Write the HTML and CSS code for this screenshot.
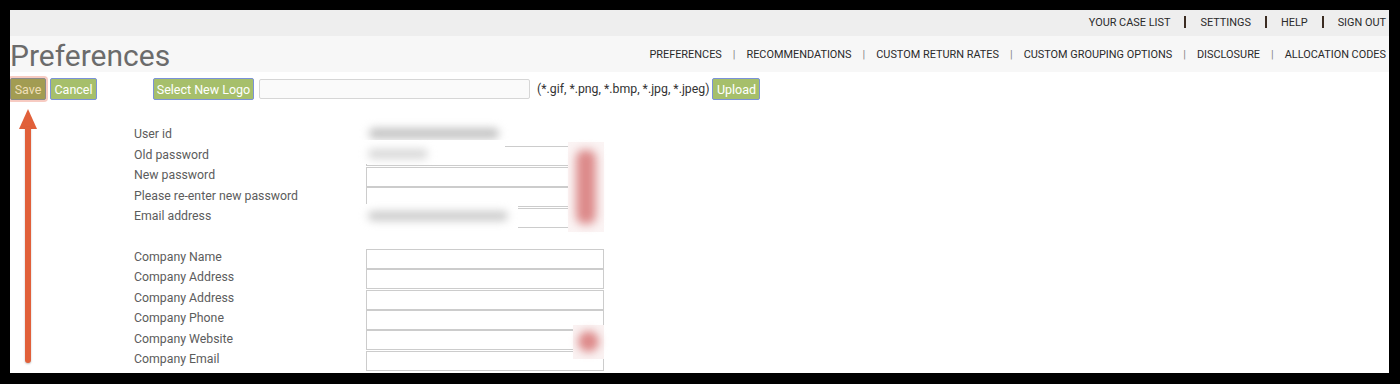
FILE: index.html
```html
<!DOCTYPE html>
<html>
<head>
<meta charset="utf-8">
<link rel="stylesheet" href="styles.css">
</head>
<body>
<div class="frame">
  <div class="topbar">
    <a class="toplink">YOUR CASE LIST</a><span class="bar"></span>
    <a class="toplink">SETTINGS</a><span class="bar"></span>
    <a class="toplink">HELP</a><span class="bar"></span>
    <a class="toplink">SIGN OUT</a>
  </div>
  <div class="header">
    <h1 class="title">Preferences</h1>
    <nav class="subnav">
      <a>PREFERENCES</a><span class="sep">|</span>
      <a>RECOMMENDATIONS</a><span class="sep">|</span>
      <a>CUSTOM RETURN RATES</a><span class="sep">|</span>
      <a>CUSTOM GROUPING OPTIONS</a><span class="sep">|</span>
      <a>DISCLOSURE</a><span class="sep">|</span>
      <a>ALLOCATION CODES</a>
    </nav>
  </div>
  <div class="toolbar">
    <button class="btn btn-save">Save</button>
    <button class="btn btn-cancel">Cancel</button>
    <button class="btn btn-logo">Select New Logo</button>
    <input class="file-input" type="text">
    <span class="hint">(*.gif, *.png, *.bmp, *.jpg, *.jpeg)</span>
    <button class="btn btn-upload">Upload</button>
  </div>
  <div class="form">
    <div class="grid">
      <label class="lbl">User id</label>
      <div class="cell"><div class="blur-text w1"></div></div>
      <label class="lbl">Old password</label>
      <div class="cell"><input class="field" type="password"><div class="mask m1"><div class="blur-text w2"></div></div></div>
      <label class="lbl">New password</label>
      <div class="cell"><input class="field" type="password"></div>
      <label class="lbl">Please re-enter new password</label>
      <div class="cell"><input class="field" type="password"></div>
      <label class="lbl">Email address</label>
      <div class="cell"><input class="field" type="text"><div class="mask m2"><div class="blur-text w3"></div></div></div>
      <div class="spacer"></div>
      <label class="lbl">Company Name</label>
      <div class="cell"><input class="field" type="text"></div>
      <label class="lbl">Company Address</label>
      <div class="cell"><input class="field" type="text"></div>
      <label class="lbl">Company Address</label>
      <div class="cell"><input class="field" type="text"></div>
      <label class="lbl">Company Phone</label>
      <div class="cell"><input class="field" type="text"></div>
      <label class="lbl">Company Website</label>
      <div class="cell"><input class="field" type="text"></div>
      <label class="lbl">Company Email</label>
      <div class="cell"><input class="field" type="text"></div>
    </div>
    <div class="redact r1"><div class="redact-core"></div></div>
    <div class="redact r2"><div class="redact-dot"></div></div>
  </div>
  <div class="arrow">
    <div class="arrow-head"></div>
    <div class="arrow-shaft"></div>
  </div>
</div>
</body>
</html>
```

FILE: styles.css
```css
html, body {
  margin: 0;
  padding: 0;
  background: #000;
}
body {
  font-family: Roboto, "Liberation Sans", Arial, sans-serif;
}
.frame {
  position: relative;
  margin: 10px 0 0 10px;
  width: 1379px;
  height: 363px;
  background: #fff;
  overflow: hidden;
}
.topbar {
  height: 26px;
  background: #eeeeee;
  display: flex;
  justify-content: flex-end;
  align-items: center;
  padding-right: 3px;
  box-sizing: border-box;
  padding-bottom: 2px;
}
.toplink {
  font-size: 10.9px;
  color: #2a2a2a;
}
.bar {
  display: inline-block;
  width: 2px;
  height: 12px;
  background: #3b2c22;
  margin: 0 14px;
}
.header {
  height: 36px;
  background: #f7f7f7;
  display: flex;
  justify-content: space-between;
  align-items: center;
}
.title {
  margin: 0;
  font-size: 30px;
  font-weight: 400;
  color: #6b6b6b;
  line-height: 36px;
  padding-top: 3px;
}
.subnav {
  font-size: 10.9px;
  color: #2a2a2a;
  padding-right: 3px;
  display: flex;
  align-items: center;
  padding-top: 1px;
}
.subnav .sep {
  color: #888;
  margin: 0 11px;
}
.toolbar {
  margin-top: 6px;
  height: 22px;
  display: flex;
  align-items: center;
}
.btn {
  height: 22px;
  box-sizing: border-box;
  font-family: Roboto, "Liberation Sans", Arial, sans-serif;
  font-size: 12.5px;
  color: #fff;
  background: #a6bf6b;
  border: 1px solid #7b92d8;
  border-radius: 2px;
  padding: 0;
  margin: 0;
}
.btn-save {
  background: #a29c52;
  color: #f0dfb8;
  border-color: #8a8b8a;
  box-shadow: 0 0 0 2px #f7cbc2;
  width: 36px;
}
.btn-cancel {
  margin-left: 4px;
  width: 47px;
}
.btn-logo {
  margin-left: 56px;
  width: 101px;
}
.file-input {
  margin-left: 5px;
  width: 271px;
  height: 20px;
  box-sizing: border-box;
  border: 1px solid #d6d6d6;
  border-radius: 2px;
  background: #fafafa;
  padding: 0;
}
.hint {
  margin-left: 7px;
  font-size: 12.3px;
  color: #333;
}
.btn-upload {
  margin-left: 3px;
  width: 48px;
}
.form {
  position: relative;
  margin-top: 24px;
  padding-left: 124px;
}
.grid {
  display: grid;
  grid-template-columns: 232px 238px;
  grid-auto-rows: 20.45px;
}
.lbl {
  font-size: 12.3px;
  color: #5c5c5c;
  align-self: center;
  white-space: nowrap;
}
.spacer {
  grid-column: 1 / span 2;
}
.cell {
  position: relative;
}
.field {
  display: block;
  width: 238px;
  height: 20px;
  margin: 2px 0 0 0;
  box-sizing: border-box;
  border: 1px solid #cccccc;
  background: #fff;
  padding: 0;
}
.blur-text {
  background: #c4c4c4;
  filter: blur(4px);
  border-radius: 5px;
}
.w1 {
  width: 130px;
  height: 11px;
  margin: 4px 0 0 3px;
}
.mask {
  position: absolute;
  background: #fff;
  top: 0;
  left: -6px;
}
.m1 {
  width: 145px;
  height: 24px;
  top: -4px;
}
.w2 {
  width: 60px;
  height: 10px;
  margin: 9px 0 0 8px;
  background: #d8d8d8;
}
.m2 {
  width: 160px;
  height: 24px;
  top: -2px;
  left: -8px;
}
.w3 {
  width: 140px;
  height: 10px;
  margin: 7px 0 0 10px;
  background: #cccccc;
}
.redact {
  position: absolute;
  background: #fbf4f4;
}
.r1 {
  left: 558px;
  top: 18px;
  width: 36px;
  height: 90px;
}
.redact-core {
  position: absolute;
  left: 8px;
  top: 8px;
  width: 20px;
  height: 74px;
  background: #dc8a8a;
  filter: blur(5px);
  border-radius: 8px;
}
.r2 {
  left: 563px;
  top: 201px;
  width: 31px;
  height: 34px;
  background: #faf2f2;
}
.redact-dot {
  position: absolute;
  left: 5px;
  top: 6px;
  width: 21px;
  height: 21px;
  border-radius: 50%;
  background: #dd8a8a;
  filter: blur(4px);
}
.arrow {
  position: absolute;
  left: 8px;
  top: 99px;
  width: 19px;
  display: flex;
  flex-direction: column;
  align-items: center;
}
.arrow-head {
  width: 0;
  height: 0;
  border-left: 9px solid transparent;
  border-right: 9px solid transparent;
  border-bottom: 20px solid #e1603a;
}
.arrow-shaft {
  width: 6px;
  height: 236px;
  margin-top: -2px;
  background: #e1603a;
  border-radius: 0 0 3px 3px;
  box-shadow: 0 1px 2px rgba(0,0,0,0.25);
}
```
